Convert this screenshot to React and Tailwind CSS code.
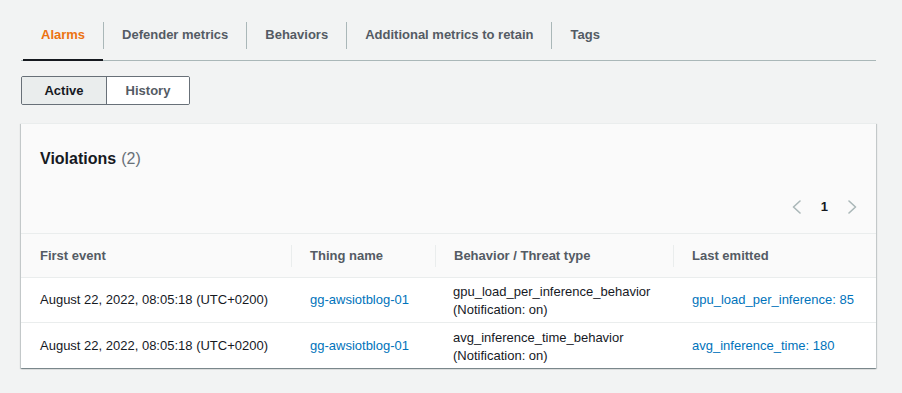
import React from "react";

const tabs = ["Alarms", "Defender metrics", "Behaviors", "Additional metrics to retain", "Tags"];

const rows = [
	{
		first: "August 22, 2022, 08:05:18 (UTC+0200)",
		thing: "gg-awsiotblog-01",
		behavior: "gpu_load_per_inference_behavior",
		last: "gpu_load_per_inference: 85",
	},
	{
		first: "August 22, 2022, 08:05:18 (UTC+0200)",
		thing: "gg-awsiotblog-01",
		behavior: "avg_inference_time_behavior",
		last: "avg_inference_time: 180",
	},
];

function Chevron({ dir }) {
	return (
		<svg width="9" height="14" viewBox="0 0 9 14" fill="none">
			<polyline
				points={dir === "left" ? "8,1 1.5,7 8,13" : "1,1 7.5,7 1,13"}
				stroke="#aab7b8"
				strokeWidth="1.6"
				strokeLinejoin="round"
				strokeLinecap="round"
			/>
		</svg>
	);
}

function Tabs() {
	return (
		<div className="mt-[10px] flex border-b border-[#aab7b8]">
			{tabs.map((t, i) => (
				<React.Fragment key={t}>
					{i > 0 && <div className="w-px h-[27px] self-center bg-[#aab7b8]" />}
					<div
						className={
							"relative h-[50px] pr-[18px] flex items-center text-[13px] font-bold " +
							(i === 0 ? "pl-[20px] text-[#ec7211]" : "pl-[18px] text-[#545b64]")
						}>
						{t}
						{i === 0 && <div className="absolute left-[2px] right-0 bottom-[-1px] h-[2px] bg-[#16191f]" />}
					</div>
				</React.Fragment>
			))}
		</div>
	);
}

function Segmented() {
	return (
		<div className="mt-[15px] flex h-[29px] w-[169px] rounded-[2px] border border-[#687078] overflow-hidden text-[13px] font-bold">
			<div className="w-[85px] flex items-center justify-center bg-[#eaeded] text-[#16191f] border-r border-[#687078]">
				Active
			</div>
			<div className="flex-1 flex items-center justify-center bg-white text-[#545b64]">History</div>
		</div>
	);
}

export default function App() {
	return (
		<div
			className="w-full h-[393px] bg-[#f2f3f3] pl-[21px] pr-[26px] overflow-hidden"
			style={{ fontFamily: '"Liberation Sans", Arial, sans-serif' }}>
			<Tabs />
			<Segmented />

			<div className="mt-[18px] bg-white border-t border-[#eaeded] shadow-[0_1px_1px_0_rgba(0,28,36,0.3),1px_1px_1px_0_rgba(0,28,36,0.15),-1px_1px_1px_0_rgba(0,28,36,0.15)]">
				<div className="bg-[#fafafa] pt-[25px] pb-[16px] border-b border-[#eaeded]">
					<div className="pl-[19px] h-[20px] flex items-center text-[16px] leading-[20px]">
						<span className="font-bold text-[#16191f]">Violations</span>
						<span className="ml-[5px] text-[#687078]">(2)</span>
					</div>
					<div className="mt-[28px] h-[20px] pr-[19px] flex items-center justify-end gap-[20px]">
						<Chevron dir="left" />
						<span className="text-[13px] font-bold text-[#16191f]">1</span>
						<Chevron dir="right" />
					</div>
				</div>

				<div className="grid grid-cols-[270px_144px_238px_1fr] h-[44px] bg-[#fafafa] border-b border-[#eaeded] text-[13px] font-bold text-[#545b64]">
					<div className="flex items-center pl-[19px]">First event</div>
					<div className="flex items-center">
						<div className="h-[22px] border-l border-[#eaeded] pl-[18px] flex items-center">Thing name</div>
					</div>
					<div className="flex items-center">
						<div className="h-[22px] border-l border-[#eaeded] pl-[18px] flex items-center">Behavior / Threat type</div>
					</div>
					<div className="flex items-center">
						<div className="h-[22px] border-l border-[#eaeded] pl-[18px] flex items-center">Last emitted</div>
					</div>
				</div>

				{rows.map((r, i) => (
					<div
						key={i}
						className={
							"grid grid-cols-[270px_144px_238px_1fr] h-[45px] text-[13px] text-[#16191f] " +
							(i === 0 ? "border-b border-[#eaeded]" : "")
						}>
						<div className="flex items-center pl-[19px]">{r.first}</div>
						<div className="flex items-center pl-[19px]">
							<span className="text-[#0073bb]">{r.thing}</span>
						</div>
						<div className="flex flex-col justify-center pl-[18px] leading-[18px] pt-[2px]">
							<span>{r.behavior}</span>
							<span>(Notification: on)</span>
						</div>
						<div className="flex items-center pl-[19px]">
							<span className="text-[#0073bb]">{r.last}</span>
						</div>
					</div>
				))}
			</div>
		</div>
	);
}
